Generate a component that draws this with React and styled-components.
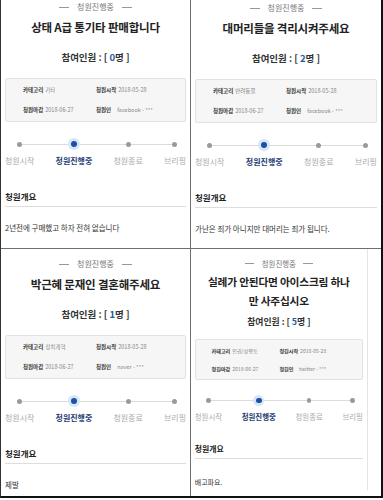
import styled, { createGlobalStyle } from "styled-components";

const GlobalStyle = createGlobalStyle`
  html, body {
    margin: 0;
    padding: 0;
    background: #fff;
  }
  body {
    font-family: "Noto Sans CJK KR", "Noto Sans", sans-serif;
  }
`;

const Frame = styled.div`
  width: 383px;
  height: 498px;
  box-sizing: border-box;
  border-left: 1px solid #333;
  border-right: 2px solid #111;
  border-bottom: 2px solid #111;
  display: grid;
  grid-template-columns: 189px 190px;
  grid-template-rows: 248px 247px;
  gap: 1px;
  background: #6f6f6f;
`;

const Cell = styled.div`
  background: #fff;
  overflow: hidden;
`;

const Panel = styled.div`
  zoom: ${(p) => p.$zoom || 1};
  width: ${(p) => (p.$width ? `${p.$width}px` : "auto")};
  box-sizing: border-box;
  padding: ${(p) => p.$top}px 4px ${(p) => (p.$edge ? 2 : 0)}px;
  border-right: ${(p) => (p.$edge ? "1px solid #e4e4e4" : "none")};
`;

const Status = styled.div`
  display: flex;
  align-items: center;
  justify-content: center;
  gap: 8px;
  font-size: 8px;
  line-height: 12px;
  color: #777;
  &::before,
  &::after {
    content: "";
    width: 10px;
    height: 1px;
    background: #999;
  }
`;

const Title = styled.h1`
  margin: 4px 0 0;
  padding: 0 8px;
  font-size: 11.5px;
  line-height: 20px;
  font-weight: 700;
  color: #222;
  text-align: center;
  letter-spacing: -0.2px;
`;

const Count = styled.div`
  margin-top: ${(p) => p.$gap}px;
  font-size: 9.5px;
  line-height: 14px;
  font-weight: 700;
  color: #333;
  text-align: center;
`;

const Num = styled.span`
  color: #2658a8;
`;

const InfoBox = styled.div`
  margin-top: ${(p) => p.$gap}px;
  border: 1px solid #e2e2e2;
  border-radius: 2px;
  background: #f6f6f6;
  padding: 5px 0 5px 17px;
  display: grid;
  grid-template-columns: 73px 1fr;
  row-gap: 8px;
  font-size: 5.5px;
  line-height: 12px;
`;

const InfoItem = styled.div`
  white-space: nowrap;
  color: #888;
  b {
    color: #333;
    font-weight: 700;
    margin-right: ${(p) => (p.$wide ? 6 : 2)}px;
  }
`;

const Steps = styled.div`
  position: relative;
  margin-top: 16px;
  display: flex;
  justify-content: space-between;
  &::before {
    content: "";
    position: absolute;
    top: 5.5px;
    left: 15px;
    right: 11px;
    height: 1px;
    background: #dcdcdc;
  }
`;

const Step = styled.div`
  position: relative;
  display: flex;
  flex-direction: column;
  align-items: center;
  gap: 5px;
`;

const Dot = styled.span`
  width: 12px;
  height: 12px;
  border-radius: 50%;
  display: flex;
  align-items: center;
  justify-content: center;
  background: ${(p) => (p.$active ? "#d4e6f8" : "transparent")};
  &::after {
    content: "";
    width: ${(p) => (p.$active ? 6 : 5)}px;
    height: ${(p) => (p.$active ? 6 : 5)}px;
    border-radius: 50%;
    background: ${(p) => (p.$active ? "#1f4f9f" : "#9a9a9a")};
  }
`;

const StepLabel = styled.span`
  font-size: 8px;
  line-height: 12px;
  white-space: nowrap;
  color: ${(p) => (p.$active ? "#1f3d73" : "#aaa")};
  font-weight: ${(p) => (p.$active ? 700 : 400)};
`;

const Heading = styled.div`
  margin-top: 23px;
  padding-bottom: 4px;
  border-bottom: 1px solid #dddddd;
  font-size: 8.5px;
  line-height: 12px;
  font-weight: 700;
  color: #222;
`;

const Body = styled.p`
  margin: ${(p) => p.$gap}px 0 0;
  font-size: 7.5px;
  line-height: 12px;
  color: #333;
`;

const steps = ["청원시작", "청원진행중", "청원종료", "브리핑"];

const petitions = [
  {
    title: "상태 A급 통기타 판매합니다",
    count: 0,
    category: "기타",
    author: "facebook - ***",
    body: "2년전에 구매했고 하자 전혀 없습니다",
    top: 1,
  },
  {
    title: "대머리들을 격리시켜주세요",
    count: 2,
    category: "반려동물",
    author: "facebook - ***",
    body: "가난은 죄가 아니지만 대머리는 죄가 됩니다.",
    top: 2,
  },
  {
    title: "박근혜 문재인 결혼해주세요",
    count: 1,
    category: "정치개혁",
    author: "naver - ***",
    body: "제발",
    top: 9,
  },
  {
    title: "실례가 안된다면 아이스크림 하나 만 사주십시오",
    count: 5,
    category: "인권/성평등",
    author: "twitter - ***",
    body: "배고파요.",
    top: 10,
    zoom: 0.93,
    width: 190,
    edge: true,
    countGap: 5,
    boxGap: 12,
    bodyGap: 19,
  },
];

function Petition({ p }) {
  return (
    <Panel $top={p.top} $zoom={p.zoom} $width={p.width} $edge={p.edge}>
      <Status>청원진행중</Status>
      <Title>{p.title}</Title>
      <Count $gap={p.countGap ?? 13}>
        참여인원 : [ <Num>{p.count}</Num>명 ]
      </Count>
      <InfoBox $gap={p.boxGap ?? 14}>
        <InfoItem>
          <b>카테고리</b>
          {p.category}
        </InfoItem>
        <InfoItem>
          <b>청원시작</b>2018-05-28
        </InfoItem>
        <InfoItem>
          <b>청원마감</b>2018-06-27
        </InfoItem>
        <InfoItem $wide>
          <b>청원인</b>
          {p.author}
        </InfoItem>
      </InfoBox>
      <Steps>
        {steps.map((s, i) => (
          <Step key={s}>
            <Dot $active={i === 1} />
            <StepLabel $active={i === 1}>{s}</StepLabel>
          </Step>
        ))}
      </Steps>
      <Heading>청원개요</Heading>
      <Body $gap={p.bodyGap ?? 15}>{p.body}</Body>
    </Panel>
  );
}

export default function App() {
  return (
    <>
      <GlobalStyle />
      <Frame>
        {petitions.map((p) => (
          <Cell key={p.title}>
            <Petition p={p} />
          </Cell>
        ))}
      </Frame>
    </>
  );
}
